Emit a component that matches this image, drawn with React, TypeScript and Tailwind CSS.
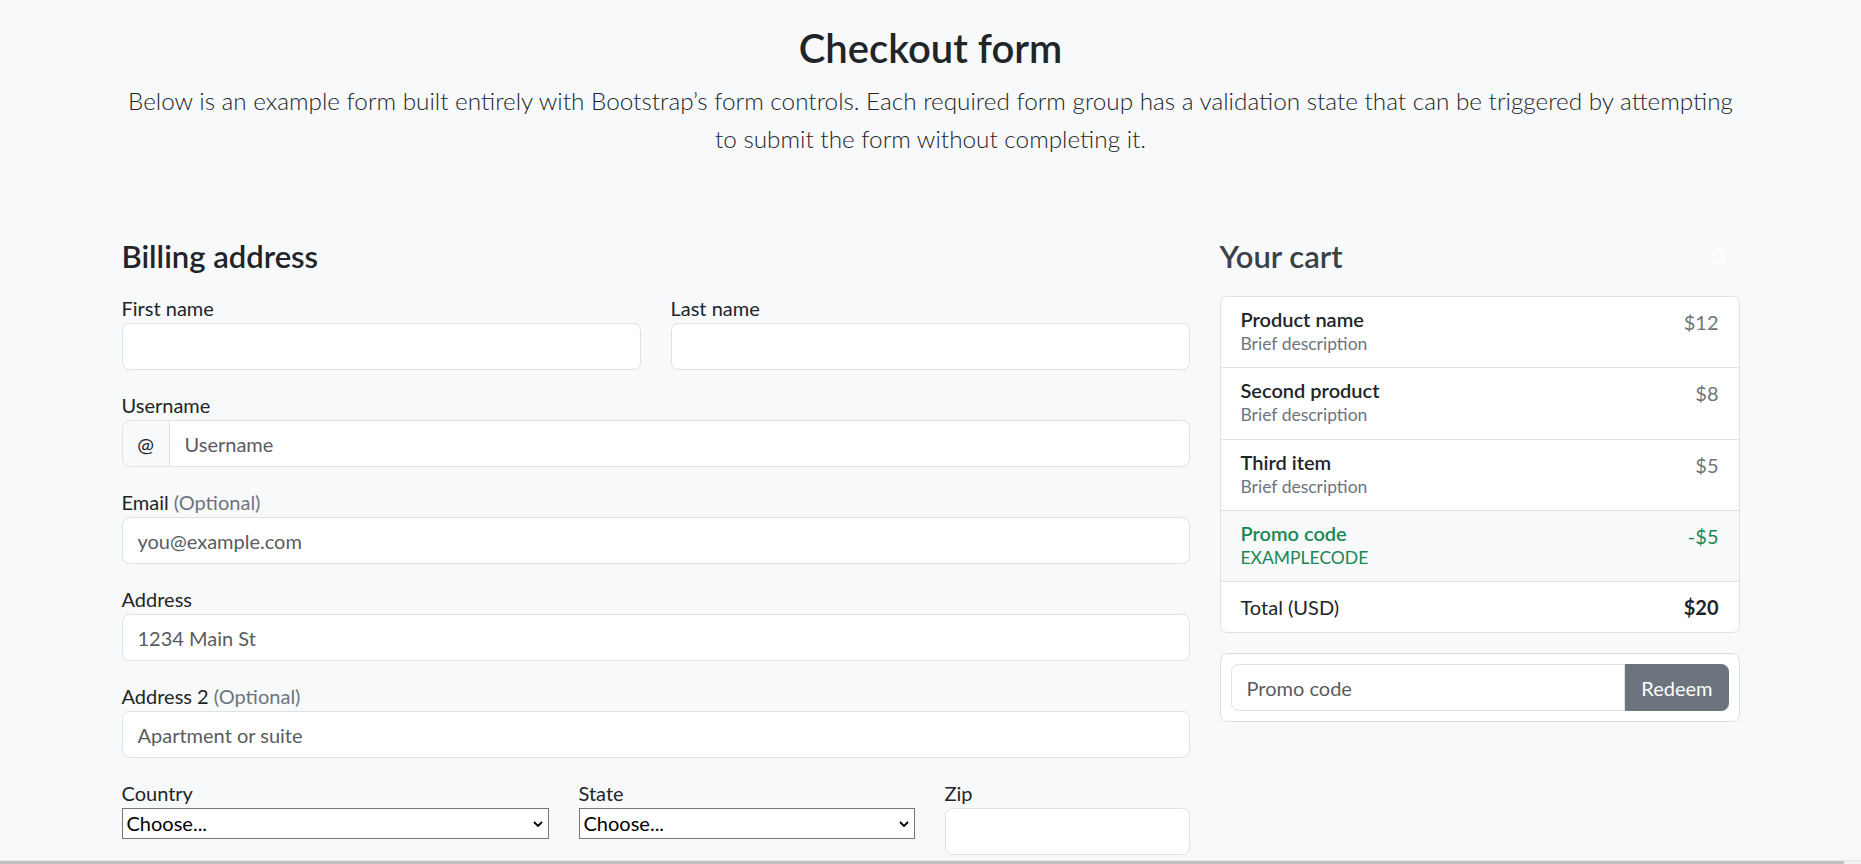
import React from "react";

const inputCls =
  "block w-full h-[47px] rounded-[7.5px] border border-[#dee2e6] bg-white px-[15px] text-[20px] leading-[30px] text-[#212529] placeholder:text-[#595c5f] outline-none";

function Label({ children }: { children: React.ReactNode }) {
  return <label className="block text-[20px] leading-[30px]">{children}</label>;
}

function Optional() {
  return <span className="text-[#6c757d]">(Optional)</span>;
}

function NativeSelect() {
  return (
    <div className="relative">
      <select className="block h-[31px] w-full appearance-none rounded-none border border-[#767676] bg-white pl-[4px] pr-[24px] text-[20px] leading-[29px] text-black outline-none">
        <option>Choose...</option>
      </select>
      <svg
        className="pointer-events-none absolute right-[6px] top-[13px] h-[6px] w-[10px]"
        viewBox="0 0 10 6"
      >
        <path d="M1 1l4 4 4-4" stroke="#000" strokeWidth="1.8" fill="none" />
      </svg>
    </div>
  );
}

type CartItem = { name: string; desc: string; price: string };

const items: CartItem[] = [
  { name: "Product name", desc: "Brief description", price: "$12" },
  { name: "Second product", desc: "Brief description", price: "$8" },
  { name: "Third item", desc: "Brief description", price: "$5" },
];

function Cart() {
  return (
    <aside className="w-[520px] shrink-0">
      <h4 className="mb-[22px] flex h-[36px] items-center justify-between text-[31px] leading-[36px] font-semibold">
        <span className="text-[#394247]">Your cart</span>
        <span className="rounded-full px-[14px] py-[6px] text-[23px] leading-none font-bold text-white">3</span>
      </h4>

      <ul className="overflow-hidden rounded-[7.5px] border border-[#dee2e6] bg-white">
        {items.map((it) => (
          <li key={it.name} className="flex justify-between border-b border-[#dee2e6] px-[20px] py-[10px]">
            <div>
              <h6 className="text-[20px] leading-[24px] font-semibold">{it.name}</h6>
              <small className="block text-[17.5px] leading-[26.25px] text-[#6c757d]">{it.desc}</small>
            </div>
            <span className="text-[20px] leading-[30px] text-[#6c757d]">{it.price}</span>
          </li>
        ))}
        <li className="flex justify-between border-b border-[#dee2e6] bg-[#f8f9fa] px-[20px] py-[10px] text-[#198754]">
          <div>
            <h6 className="text-[20px] leading-[24px] font-semibold">Promo code</h6>
            <small className="block text-[17.5px] leading-[26.25px]">EXAMPLECODE</small>
          </div>
          <span className="text-[20px] leading-[30px]">-$5</span>
        </li>
        <li className="flex justify-between px-[20px] py-[10px] text-[20px] leading-[30px]">
          <span>Total (USD)</span>
          <strong className="font-bold">$20</strong>
        </li>
      </ul>

      <form className="mt-[20px] flex rounded-[7.5px] border border-[#dadcdf] bg-white p-[10px]">
        <input
          className="h-[47px] min-w-0 flex-1 rounded-l-[7.5px] border border-[#dee2e6] bg-white px-[15px] text-[20px] leading-[30px] placeholder:text-[#595c5f] outline-none"
          placeholder="Promo code"
        />
        <button
          type="button"
          className="h-[47px] rounded-r-[7.5px] border border-[#6c757d] bg-[#6c757d] px-[15px] text-[20px] leading-[30px] text-white"
        >
          Redeem
        </button>
      </form>
    </aside>
  );
}

function Billing() {
  return (
    <main className="w-[1068px] shrink-0">
      <h4 className="mb-[19px] text-[31px] leading-[36px] font-semibold">Billing address</h4>
      <form className="flex flex-col gap-[20px]">
        <div className="grid grid-cols-2 gap-x-[30px]">
          <div>
            <Label>First name</Label>
            <input className={inputCls} />
          </div>
          <div>
            <Label>Last name</Label>
            <input className={inputCls} />
          </div>
        </div>

        <div>
          <Label>Username</Label>
          <div className="flex h-[47px]">
            <span className="flex w-[48px] items-center justify-center rounded-l-[7.5px] border border-[#dee2e6] bg-[#f8f9fa] text-[20px]">
              @
            </span>
            <input
              className="-ml-px h-[47px] min-w-0 flex-1 rounded-r-[7.5px] border border-[#dee2e6] bg-white px-[15px] text-[20px] leading-[30px] placeholder:text-[#595c5f] outline-none"
              placeholder="Username"
            />
          </div>
        </div>

        <div>
          <Label>
            Email <Optional />
          </Label>
          <input className={inputCls} placeholder="you@example.com" />
        </div>

        <div>
          <Label>Address</Label>
          <input className={inputCls} placeholder="1234 Main St" />
        </div>

        <div>
          <Label>
            Address 2 <Optional />
          </Label>
          <input className={inputCls} placeholder="Apartment or suite" />
        </div>

        <div className="flex gap-[30px]">
          <div className="w-[427px] shrink-0">
            <Label>Country</Label>
            <NativeSelect />
          </div>
          <div className="w-[336px] shrink-0">
            <Label>State</Label>
            <NativeSelect />
          </div>
          <div className="flex-1">
            <Label>Zip</Label>
            <input className={inputCls} />
          </div>
        </div>
      </form>
    </main>
  );
}

export default function App() {
  return (
    <div className="relative h-screen w-full overflow-hidden bg-[#f8f9fa] font-['Lato',sans-serif] text-[#212529]">
      <div className="mx-auto w-[1618px]">
        <header className="pt-[24px] pb-[81px] text-center">
          <h2 className="text-[40px] leading-[48px] font-semibold">Checkout form</h2>
          <p className="mt-[10px] text-[24.3px] leading-[37.5px] font-light">
            <span className="whitespace-nowrap">
              Below is an example form built entirely with Bootstrap’s form controls. Each required form group has a
              validation state that can be triggered by attempting
            </span>
            <br />
            to submit the form without completing it.
          </p>
        </header>

        <div className="flex items-start gap-[30px]">
          <Billing />
          <Cart />
        </div>
      </div>

      {/* horizontal scrollbar strip at the bottom edge */}
      <div className="absolute bottom-0 left-0 right-0 h-[4px] border-t border-[#e8e8e8] bg-[#f1f1f1]">
        <div className="h-[3px] w-[1844px] bg-[#c1c1c1]" />
      </div>
    </div>
  );
}
